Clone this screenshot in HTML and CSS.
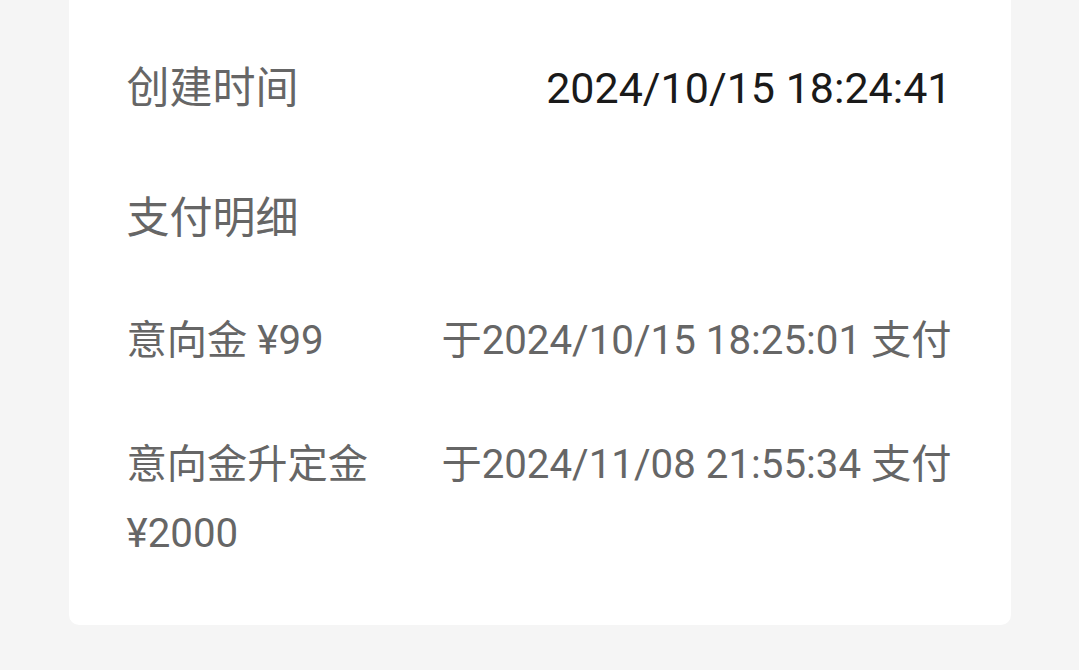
FILE: index.html
```html
<!DOCTYPE html>
<html lang="zh-CN">
<head>
    <meta charset="UTF-8">
    <meta name="viewport" content="width=device-width, initial-scale=1.0">
    <title>订单详情</title>
    <link rel="stylesheet" href="styles.css">
</head>
<body>
    <div class="card">
        <div class="info-row">
            <span class="label">创建时间</span>
            <span class="value">2024/10/15 18:24:41</span>
        </div>

        <div class="section-title">支付明细</div>

        <ul class="pay-list">
            <li class="pay-item">
                <span class="pay-name">意向金 ¥99</span>
                <span class="pay-time">于2024/10/15 18:25:01 支付</span>
            </li>
            <li class="pay-item">
                <span class="pay-name">意向金升定金 ¥2000</span>
                <span class="pay-time">于2024/11/08 21:55:34 支付</span>
            </li>
        </ul>
    </div>
</body>
</html>
```

FILE: styles.css
```css
/* Global */
body {
    font-family: Roboto, "Noto Sans CJK SC", sans-serif;
    margin: 0;
    padding: 0;
    background: #f5f5f5;
    color: #666;
    overflow: hidden;
}

.card {
    background: #fff;
    width: 942px;
    margin: 0 auto;
    box-sizing: border-box;
    padding: 58px 59px 57px 58px;
    border-radius: 0 0 10px 10px;
}

.info-row {
    display: flex;
    justify-content: space-between;
    font-size: 43px;
    line-height: 60px;
    margin-bottom: 70px;
}

.info-row .value {
    color: #1a1a1a;
}

.section-title {
    font-size: 43px;
    line-height: 60px;
    margin-bottom: 58px;
}

.pay-list {
    list-style: none;
    margin: 0;
    padding: 0;
}

.pay-item {
    display: flex;
    justify-content: space-between;
    font-size: 40.25px;
    line-height: 69px;
}

.pay-item + .pay-item {
    margin-top: 55px;
}

.pay-name {
    flex: 1;
}

.pay-time {
    white-space: nowrap;
    text-align: right;
}
```
